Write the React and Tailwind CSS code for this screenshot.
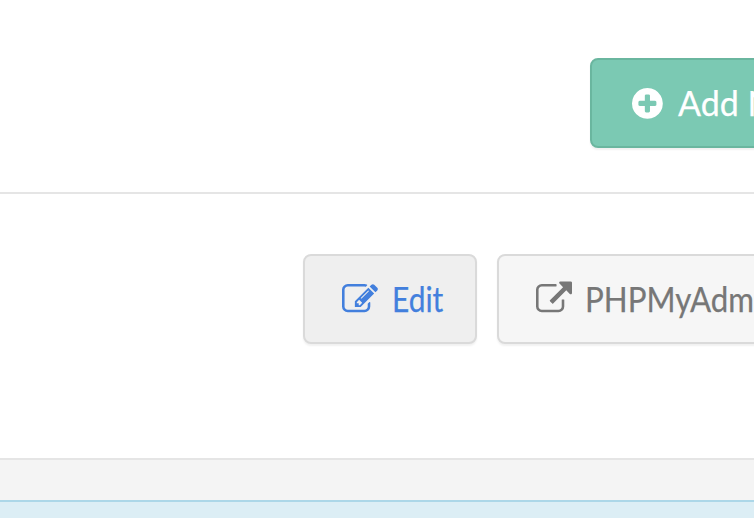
import React from 'react';
import clsx from 'clsx';

const ICONS = {
  plus: 'M1344 960v-128q0-26-19-45t-45-19h-256v-256q0-26-19-45t-45-19h-128q-26 0-45 19t-19 45v256h-256q-26 0-45 19t-19 45v128q0 26 19 45t45 19h256v256q0 26 19 45t45 19h128q26 0 45-19t19-45v-256h256q26 0 45-19t19-45zm320-64q0 209-103 385.5t-279.5 279.5-385.5 103-385.5-103-279.5-279.5-103-385.5 103-385.5 279.5-279.5 385.5-103 385.5 103 279.5 279.5 103 385.5z',
  edit: 'M888 1184l116-116-152-152-116 116v56h96v96h56zm440-720q-16-16-33 1l-350 350q-17 17-1 33t33-1l350-350q17-17 1-33zm80 594v190q0 119-84.5 203.5t-203.5 84.5h-832q-119 0-203.5-84.5t-84.5-203.5v-832q0-119 84.5-203.5t203.5-84.5h832q63 0 117 25 15 7 18 23 3 17-9 29l-49 49q-14 14-32 8-23-6-45-6h-832q-66 0-113 47t-47 113v832q0 66 47 113t113 47h832q66 0 113-47t47-113v-126q0-13 9-22l64-64q15-15 35-7t20 29zm-96-738l288 288-672 672h-288v-288zm444 132l-92 92-288-288 92-92q28-28 68-28t68 28l152 152q28 28 28 68t-28 68z',
  external: 'M1408 928v320q0 119-84.5 203.5t-203.5 84.5h-832q-119 0-203.5-84.5t-84.5-203.5v-832q0-119 84.5-203.5t203.5-84.5h704q14 0 23 9t9 23v64q0 14-9 23t-23 9h-704q-66 0-113 47t-47 113v832q0 66 47 113t113 47h832q66 0 113-47t47-113v-320q0-14 9-23t23-9h64q14 0 23 9t9 23zm384-864v512q0 26-19 45t-45 19-45-19l-176-176-652 652q-10 10-23 10t-23-10l-114-114q-10-10-10-23t10-23l652-652-176-176q-19-19-19-45t19-45 45-19h512q26 0 45 19t19 45z',
};

const Icon = ({ name }) => (
  <svg viewBox="0 0 1792 1792" fill="currentColor" className="w-9 h-9 shrink-0 mt-[25px] overflow-visible">
    <path d={ICONS[name]} transform={name === 'plus' ? 'translate(20 20)' : 'translate(0 20)'} />
  </svg>
);

const Button = ({ className, children }) => (
  <button
    className={clsx(
      'flex items-start shrink-0 h-[90px] rounded-lg border-2 whitespace-nowrap text-[34px] leading-[44px] shadow-[0_2px_2px_rgba(0,0,0,0.06)] [-webkit-text-stroke:0.25px_currentColor]',
      className
    )}>
    {children}
  </button>
);

const App = () => (
  <div className="w-full h-[518px] overflow-hidden flex flex-col bg-white font-['Lato',sans-serif]">
    {/* ── Header row ── */}
    <div className="h-[194px] shrink-0 flex pt-[58px] pl-[590px] border-b-2 border-[#e5e5e5]">
      <Button className="w-[260px] pl-[37px] bg-[#7bc9b3] border-[#6ab69f] text-white">
        <Icon name="plus" />
        <span className="ml-[13px] mt-[21px]">Add New</span>
      </Button>
    </div>

    {/* ── Row actions ── */}
    <div className="h-[266px] shrink-0 flex gap-5 pt-[60px] pl-[303px] border-b-2 border-[#e5e5e5]">
      <Button className="w-[174px] pl-[37px] bg-[#efefef] border-[#dadada] text-[#427fdd]">
        <Icon name="edit" />
        <span className="ml-[14px] mt-[21px] origin-left scale-x-[0.88]">Edit</span>
      </Button>
      <Button className="w-[320px] pl-[37px] bg-[#f6f6f6] border-[#dadada] text-[#777777]">
        <Icon name="external" />
        <span className="ml-[13px] mt-[21px] origin-left scale-x-[0.92]">PHPMyAdmin</span>
      </Button>
    </div>

    <div className="h-10 shrink-0 bg-[#f4f4f4]" />
    <div className="flex-1 bg-[#dceef5] border-t-2 border-[#acd7e8]" />
  </div>
);

export default App;
